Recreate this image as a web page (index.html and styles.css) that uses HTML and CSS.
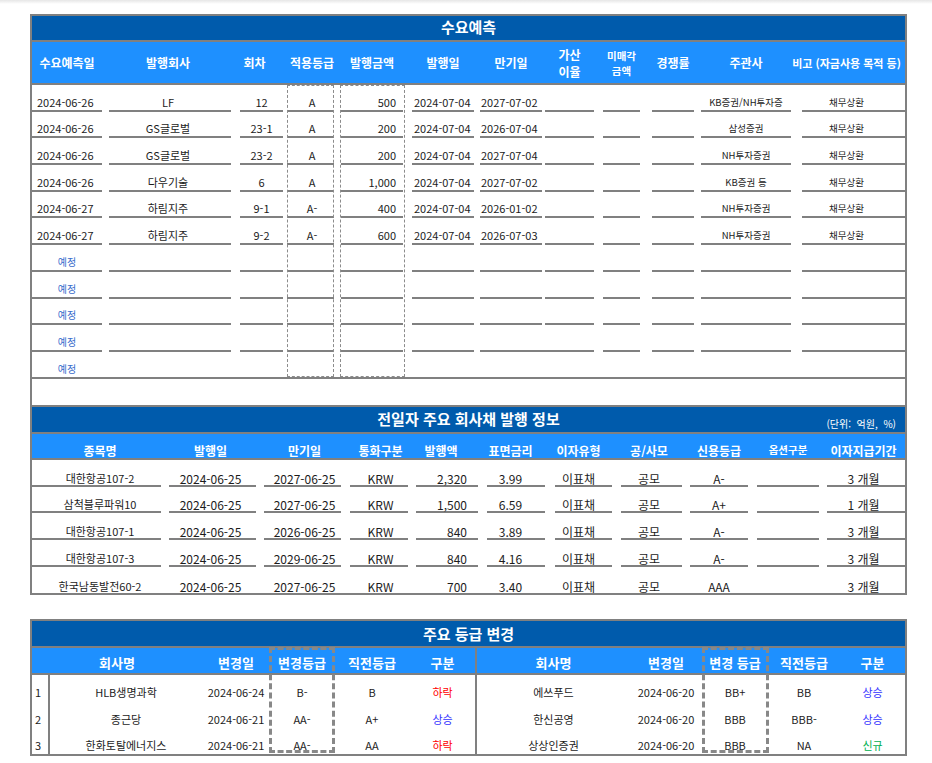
FILE: index.html
```html
<!DOCTYPE html>
<html lang="ko">
<head>
<meta charset="utf-8">
<title>수요예측</title>
<link rel="stylesheet" href="styles.css">
</head>
<body>
<div class="block">
  <div class="title t1">수요예측</div>
  <div class="h1 g1">
    <div>수요예측일</div><div>발행회사</div><div class="hc3">회차</div><div>적용등급</div><div>발행금액</div><div>발행일</div><div>만기일</div><div class="two">가산<br>이율</div><div class="two sm">미매각<br>금액</div><div>경쟁률</div><div>주관사</div><div class="hc12">비고 (자금사용 목적 등)</div>
  </div>
  <div class="b1">
    <div class="r1 g1"><div>2024-06-26</div><div>LF</div><div>12</div><div>A</div><div>500</div><div>2024-07-04</div><div>2027-07-02</div><div></div><div></div><div></div><div>KB증권/NH투자증</div><div>채무상환</div></div>
    <div class="r1 g1"><div>2024-06-26</div><div>GS글로벌</div><div>23-1</div><div>A</div><div>200</div><div>2024-07-04</div><div>2026-07-04</div><div></div><div></div><div></div><div>삼성증권</div><div>채무상환</div></div>
    <div class="r1 g1"><div>2024-06-26</div><div>GS글로벌</div><div>23-2</div><div>A</div><div>200</div><div>2024-07-04</div><div>2027-07-04</div><div></div><div></div><div></div><div>NH투자증권</div><div>채무상환</div></div>
    <div class="r1 g1"><div>2024-06-26</div><div>다우기술</div><div>6</div><div>A</div><div>1,000</div><div>2024-07-04</div><div>2027-07-02</div><div></div><div></div><div></div><div>KB증권 등</div><div>채무상환</div></div>
    <div class="r1 g1"><div>2024-06-27</div><div>하림지주</div><div>9-1</div><div>A-</div><div>400</div><div>2024-07-04</div><div>2026-01-02</div><div></div><div></div><div></div><div>NH투자증권</div><div>채무상환</div></div>
    <div class="r1 g1"><div>2024-06-27</div><div>하림지주</div><div>9-2</div><div>A-</div><div>600</div><div>2024-07-04</div><div>2026-07-03</div><div></div><div></div><div></div><div>NH투자증권</div><div>채무상환</div></div>
    <div class="r1 g1 plan"><div>예정</div><div></div><div></div><div></div><div></div><div></div><div></div><div></div><div></div><div></div><div></div><div></div></div>
    <div class="r1 g1 plan"><div>예정</div><div></div><div></div><div></div><div></div><div></div><div></div><div></div><div></div><div></div><div></div><div></div></div>
    <div class="r1 g1 plan"><div>예정</div><div></div><div></div><div></div><div></div><div></div><div></div><div></div><div></div><div></div><div></div><div></div></div>
    <div class="r1 g1 plan"><div>예정</div><div></div><div></div><div></div><div></div><div></div><div></div><div class="join"></div><div></div><div></div><div></div><div></div></div>
    <div class="r1 g1 plan end"><div>예정</div><div></div><div></div><div></div><div></div><div></div><div></div><div></div><div></div><div></div><div></div><div></div></div>
    <span class="dash1 d4"></span><span class="dash1 d5"></span>
  </div>
  <div class="blank"></div>

  <div class="title t2"><span></span><span>전일자 주요 회사채 발행 정보</span><span class="unit">(단위:&nbsp; 억원,&nbsp; %)</span></div>
  <div class="h2 g2">
    <div>종목명</div><div>발행일</div><div>만기일</div><div>통화구분</div><div>발행액</div><div>표면금리</div><div>이자유형</div><div>공/사모</div><div>신용등급</div><div class="opt">옵션구분</div><div>이자지급기간</div>
  </div>
  <div class="r2 g2"><div>대한항공107-2</div><div>2024-06-25</div><div>2027-06-25</div><div>KRW</div><div>2,320</div><div>3.99</div><div>이표채</div><div>공모</div><div>A-</div><div></div><div>3 개월</div></div>
  <div class="r2 g2"><div>삼척블루파워10</div><div>2024-06-25</div><div>2027-06-25</div><div>KRW</div><div>1,500</div><div>6.59</div><div>이표채</div><div>공모</div><div>A+</div><div></div><div>1 개월</div></div>
  <div class="r2 g2"><div>대한항공107-1</div><div>2024-06-25</div><div>2026-06-25</div><div>KRW</div><div>840</div><div>3.89</div><div>이표채</div><div>공모</div><div>A-</div><div></div><div>3 개월</div></div>
  <div class="r2 g2"><div>대한항공107-3</div><div>2024-06-25</div><div>2029-06-25</div><div>KRW</div><div>840</div><div>4.16</div><div>이표채</div><div>공모</div><div>A-</div><div></div><div>3 개월</div></div>
  <div class="r2 g2 last"><div>한국남동발전60-2</div><div>2024-06-25</div><div>2027-06-25</div><div>KRW</div><div>700</div><div>3.40</div><div>이표채</div><div>공모</div><div>AAA</div><div></div><div>3 개월</div></div>
</div>

<div class="block block3">
  <div class="title">주요 등급 변경</div>
  <div class="b3">
    <div class="h3 g3">
      <div class="span2">회사명</div><div>변경일</div><div>변경등급</div><div>직전등급</div><div>구분</div><div class="mid">회사명</div><div>변경일</div><div>변경 등급</div><div>직전등급</div><div>구분</div>
    </div>
    <div class="r3 g3"><div class="num">1</div><div>HLB생명과학</div><div>2024-06-24</div><div>B-</div><div>B</div><div class="down">하락</div><div class="mid">에쓰푸드</div><div>2024-06-20</div><div>BB+</div><div>BB</div><div class="up">상승</div></div>
    <div class="r3 g3"><div class="num">2</div><div>종근당</div><div>2024-06-21</div><div>AA-</div><div>A+</div><div class="up">상승</div><div class="mid">한신공영</div><div>2024-06-20</div><div>BBB</div><div>BBB-</div><div class="up">상승</div></div>
    <div class="r3 g3"><div class="num">3</div><div>한화토탈에너지스</div><div>2024-06-21</div><div>AA-</div><div>AA</div><div class="down">하락</div><div class="mid">상상인증권</div><div>2024-06-20</div><div>BBB</div><div>NA</div><div class="new">신규</div></div>
    <span class="dash3 d3a"></span><span class="dash3 d3b"></span>
  </div>
</div>
</body>
</html>
```

FILE: styles.css
```css
* { box-sizing: border-box; margin: 0; padding: 0; }
html { background: #fff linear-gradient(#e6e6e6, #fff) no-repeat 0 0 / 100% 4px; }
body {
  padding: 14px 0 0 30px;
  font-family: "Noto Sans CJK KR", "Noto Sans", sans-serif;
  color: #1c1c1c;
}
.block { width: 877px; border: 2px solid #808080; }
.block3 { margin-top: 24px; }

.title {
  height: 27px;
  background: #005bac;
  border-bottom: 2px solid #808080;
  color: #fff;
  font-weight: 700;
  font-size: 15px;
  line-height: 20px;
  display: flex;
  align-items: center;
  justify-content: center;
}
.t1 { height: 26px; padding-bottom: 3px; }
.t2 { display: grid; grid-template-columns: 1fr auto 1fr; }
.t2 .unit {
  justify-self: end;
  align-self: end;
  font-size: 10px;
  font-weight: 400;
  line-height: 12px;
  padding: 0 9px 2px 0;
  white-space: nowrap;
}

/* ---------- section 1 ---------- */
.g1 {
  display: grid;
  grid-template-columns: 70px 129px 52px 51px 69px 71px 68px 52px 46px 54px 97px 114px;
}
.g1 > :nth-child(2) { margin-left: 7px; }
.g1 > :nth-child(3) { margin-left: 9px; }
.g1 > :nth-child(4) { margin-left: 4px; }
.g1 > :nth-child(5) { margin-left: 7px; }
.g1 > :nth-child(6) { margin-left: 9px; }
.g1 > :nth-child(7) { margin-left: 6px; }
.g1 > :nth-child(8) { margin-left: 3px; }
.g1 > :nth-child(9) { margin-left: 9px; }
.g1 > :nth-child(10) { margin-left: 12px; }
.g1 > :nth-child(11) { margin-left: 7px; }
.g1 > :nth-child(12) { margin-left: 11px; }

.h1 {
  height: 43px;
  background: #1e90ff;
  border-bottom: 2px solid #808080;
  color: #fff;
  font-weight: 700;
  font-size: 12px;
}
.h1 > div {
  display: flex;
  align-items: center;
  justify-content: center;
  text-align: center;
  line-height: 16px;
  white-space: nowrap;
}
.h1 > :nth-child(2) { padding-right: 4px; }
.h1 > :nth-child(4) { padding-left: 3px; }
.h1 > .hc3 { padding-right: 14px; }
.h1 > .hc12 { padding-right: 14px; font-size: 11px; }
.h1 > .two { line-height: 17px; padding-top: 1px; }
.h1 > .two.sm { font-size: 10.5px; line-height: 15px; }

.b1 { position: relative; }
.r1 { height: 26.7px; }
.r1 > div {
  border-bottom: 2px solid #808080;
  display: flex;
  align-items: flex-end;
  justify-content: center;
  font-size: 11px;
  line-height: 13px;
  padding-bottom: 1px;
  white-space: nowrap;
}
.r1 > :nth-child(1) { justify-content: flex-start; padding-left: 5px; }
.r1 > :nth-child(2) { padding-right: 4px; }
.r1 > :nth-child(4) { padding-left: 3px; }
.r1 > :nth-child(5) { justify-content: flex-end; padding-right: 7px; }
.r1 > :nth-child(6) { justify-content: flex-start; padding-left: 2px; }
.r1 > :nth-child(7) { justify-content: flex-start; padding-left: 1px; }
.r1 > :nth-child(11) { font-size: 9.5px; }
.r1 > :nth-child(12) { font-size: 9.5px; padding-right: 14px; }
.r1.plan > :nth-child(1) {
  justify-content: center;
  padding-left: 0;
  color: #3a6ccc;
  font-size: 10px;
  padding-bottom: 2px;
}
.r1 > .join { margin-left: 0; }
.r1.end { border-bottom: 2px solid #808080; }
.r1.end > div { border-bottom: 0; }

.dash1 {
  position: absolute;
  top: 0;
  bottom: 2px;
  border: 1px dashed #8c8c8c;
}
.d4 { left: 255px; width: 47px; }
.d5 { left: 308px; width: 65px; }

.blank { height: 28.3px; border-bottom: 2px solid #808080; }

/* ---------- section 2 ---------- */
.g2 {
  display: grid;
  grid-template-columns: 129px 95px 85px 67px 70px 67px 67px 70px 66px 71px 86px;
}
.g2 > :nth-child(2) { margin-left: 8px; padding-right: 4px; }
.g2 > :nth-child(3) { margin-left: 8px; padding-left: 4px; }
.g2 > :nth-child(4) { margin-left: 9px; padding-left: 3px; }
.g2 > :nth-child(5) { margin-left: 8px; }
.g2 > :nth-child(6) { margin-left: 9px; padding-right: 11px; }
.g2 > :nth-child(7) { margin-left: 10px; padding-right: 10px; }
.g2 > :nth-child(8) { margin-left: 9px; padding-right: 5px; }
.g2 > :nth-child(9) { margin-left: 8px; }
.g2 > :nth-child(10) { margin-left: 9px; }
.g2 > :nth-child(11) { margin-left: 8px; padding-right: 5px; }
.g2 > :nth-child(1) { padding-left: 7px; }

.h2 {
  height: 26px;
  background: #1e90ff;
  border-bottom: 2px solid #808080;
  color: #fff;
  font-weight: 700;
  font-size: 12px;
}
.h2 > div {
  display: flex;
  align-items: flex-end;
  justify-content: center;
  line-height: 15px;
  white-space: nowrap;
}
.h2 > :nth-child(5) { padding-right: 12px; }
.h2 > .opt { font-size: 10.5px; padding-bottom: 1px; }

.r2 { height: 26.8px; }
.r2 > div {
  border-bottom: 2px solid #808080;
  display: flex;
  align-items: flex-end;
  justify-content: center;
  font-size: 12px;
  line-height: 12px;
  white-space: nowrap;
}
.r2 > :nth-child(1) { font-size: 11px; padding-bottom: 1px; }
.r2 > :nth-child(5) { justify-content: flex-end; padding-right: 11px; }
.r2.last { height: 26px; }
.r2.last > div { border-bottom: 0; }

/* ---------- section 3 ---------- */
.b3 { position: relative; }
.g3 {
  display: grid;
  grid-template-columns: 18px 152px 68px 64px 76px 65px 155px 72px 66px 72px 65px;
}
.g3 > .mid { border-left: 2px solid #808080; }
.h3 {
  height: 27px;
  background: #1e90ff;
  border-bottom: 2px solid #808080;
  color: #fff;
  font-weight: 700;
  font-size: 13px;
}
.h3 > div {
  display: flex;
  align-items: flex-end;
  justify-content: center;
  line-height: 16px;
  padding-bottom: 2px;
  white-space: nowrap;
}
.h3 > .span2 { grid-column: span 2; }

.r3 { height: 26.4px; }
.r3 > div {
  display: flex;
  align-items: flex-end;
  justify-content: center;
  font-size: 11px;
  line-height: 13px;
  padding-bottom: 2px;
  white-space: nowrap;
}
.r3 > .num { justify-content: flex-start; padding-left: 3px; border-right: 2px solid #808080; }
.down { color: #ff0000; }
.up { color: #3333ff; }
.new { color: #00b050; }

.dash3 {
  position: absolute;
  top: -1px;
  bottom: 1px;
  border: 3px dashed #888;
}
.d3a { left: 237px; width: 66px; }
.d3b { left: 670px; width: 67px; }
```
